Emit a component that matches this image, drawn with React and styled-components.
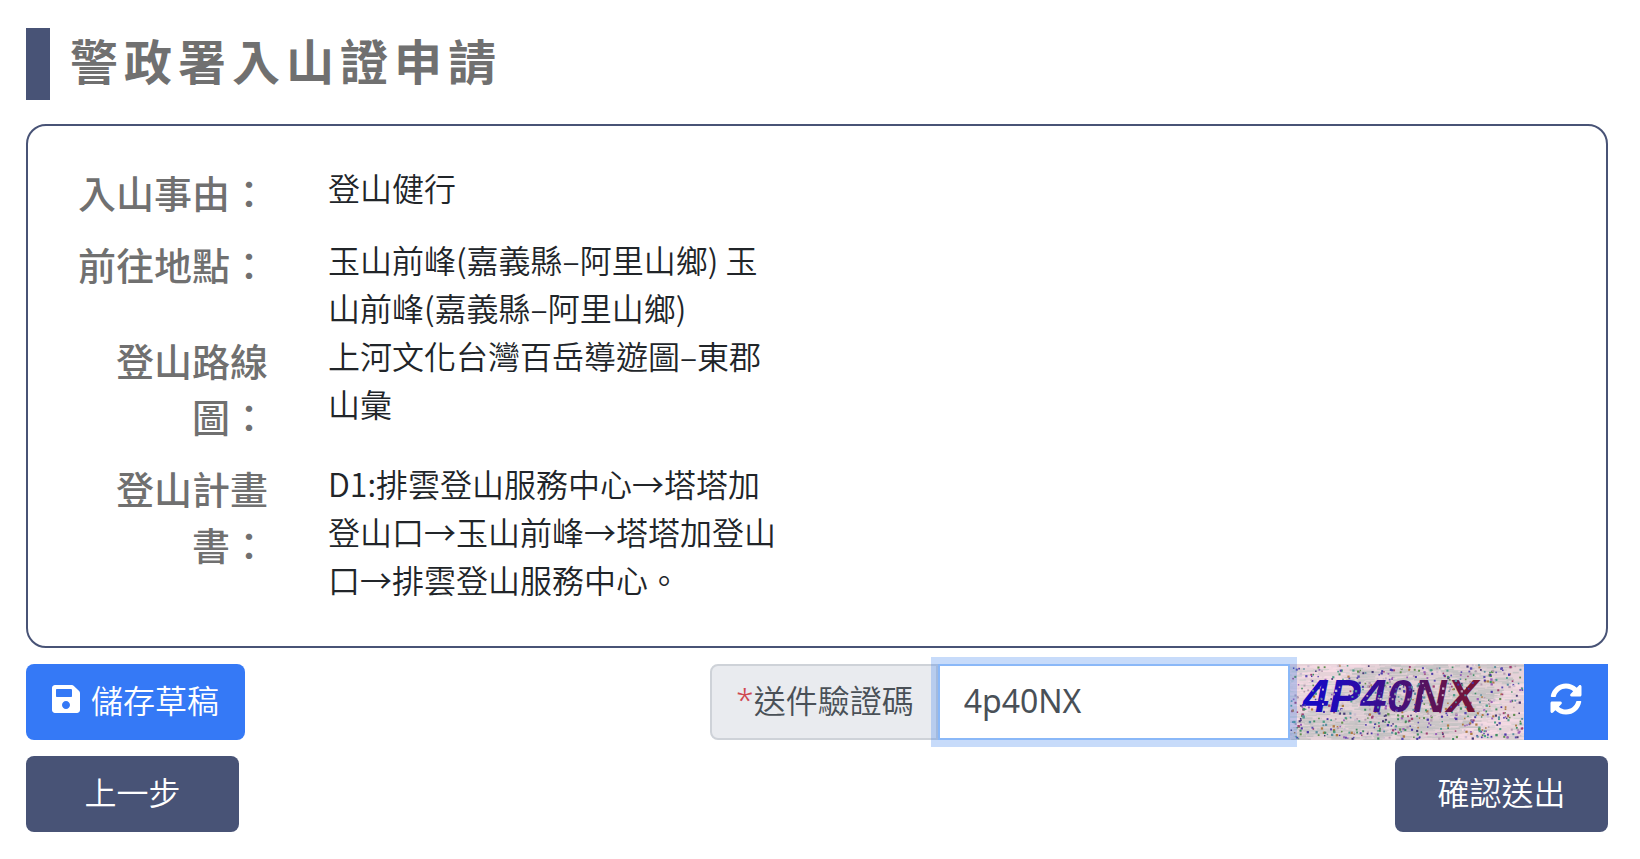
import React from "react";
import styled, { createGlobalStyle } from "styled-components";
import { FaSave, FaSyncAlt } from "react-icons/fa";

const GlobalStyle = createGlobalStyle`
  * {
    box-sizing: border-box;
  }

  body {
    margin: 0;
    background: #fff;
    color: #212529;
    font-family: "Noto Sans CJK TC", "Noto Sans", sans-serif;
    font-size: 32px;
    font-weight: 350;
    line-height: 48px;
  }
`;

const Page = styled.main`
  padding: 28px 32px 26px 26px;
`;

const Title = styled.h1`
  margin: 0 0 24px;
  padding: 0 0 10px 20px;
  border-left: 24px solid #485376;
  color: #707070;
  font-size: 48px;
  font-weight: 700;
  line-height: 62px;
  letter-spacing: 6px;
`;

const Card = styled.section`
  margin-bottom: 16px;
  padding: 37px 24px 43px;
  border: 2px solid #485376;
  border-radius: 20px;
`;

const Details = styled.dl`
  margin: 0;
`;

const Row = styled.div`
  display: grid;
  grid-template-columns: 216px minmax(0, 456px);
  column-gap: 60px;
`;

const Term = styled.dt`
  padding: 1px 0 15px;
  color: #707070;
  font-size: 38px;
  font-weight: 500;
  line-height: 56px;
  text-align: right;
`;

const Value = styled.dd`
  margin: 0;
`;

const Bar = styled.div`
  display: flex;
  justify-content: space-between;
  gap: 24px;
  margin-bottom: 16px;
`;

const Button = styled.button`
  display: inline-flex;
  align-items: center;
  justify-content: center;
  gap: 11px;
  min-width: ${({ $wide }) => ($wide ? "213px" : "0")};
  height: 76px;
  padding: 0 26px 6px;
  border: 0;
  border-radius: ${({ $square }) => ($square ? "0" : "8px")};
  background: ${({ $primary }) => ($primary ? "#3579f6" : "#485376")};
  color: #fff;
  font: inherit;
  white-space: nowrap;
  cursor: pointer;

  svg {
    flex: none;
  }
`;

const SaveIcon = styled(FaSave)`
  width: 28px;
  height: 32px;
`;

const InputGroup = styled.div`
  display: flex;
  flex: 0 1 898px;
  min-width: 0;
`;

const GroupLabel = styled.label`
  display: flex;
  align-items: center;
  padding: 0 22px 6px 24px;
  border: 2px solid #ced2d8;
  border-radius: 8px 0 0 8px;
  background: #e9ebef;
  color: #495057;
  white-space: nowrap;
`;

const Required = styled.span`
  color: #d0484f;
  font-family: "Noto Sans", sans-serif;
`;

const CodeInput = styled.input`
  position: relative;
  z-index: 1;
  flex: 1;
  min-width: 0;
  height: 76px;
  padding: 0 24px 4px;
  border: 2px solid #8ab8f8;
  border-radius: 0;
  outline: 0;
  background: #fff;
  box-shadow: 0 0 0 7px rgba(53, 125, 236, 0.28);
  color: #495057;
  font: inherit;
  font-family: "Noto Sans", "Noto Sans CJK TC", sans-serif;
  font-weight: 400;
`;

const Captcha = styled.svg`
  flex: none;
  width: 234px;
  height: 76px;
  background: #e6d2d8;
`;

// small deterministic generator so the noise is stable between renders
const createRandom = (seed) => {
  let value = seed;
  return () => {
    value = (value * 16807) % 2147483647;
    return value / 2147483647;
  };
};

const random = createRandom(4040);
const pick = (list) => list[Math.floor(random() * list.length)];

const streaks = Array.from({ length: 1100 }, () => {
  const x = random() * 234;
  const y = random() * 76;
  const middle = Math.abs(x - 117 + (y - 38)) < 85;
  return {
    x,
    y,
    width: 4 + random() * 16,
    color: middle
      ? pick(["#c3c0c2", "#cac6c7", "#c8c5c6", "#dccdd2"])
      : pick(["#f6dbe4", "#f3d9e2", "#ecd6de", "#d4cfd1"]),
  };
});

const createDots = (count, colors) =>
  Array.from({ length: count }, () => ({
    x: random() * 232,
    y: random() * 74,
    size: 1.4 + random(),
    color: pick(colors),
  }));

const dots = createDots(460, [
  "#3f8f63",
  "#5a4ab0",
  "#a03f72",
  "#4f9f8a",
  "#b07a45",
  "#473a76",
  "#9a5fb8",
  "#608f50",
]);

const specks = createDots(240, ["#cbbcd0", "#5b8fa0", "#4a36a8", "#b59ab0"]);

const renderDot = (dot, i) => (
  <rect
    key={i}
    x={dot.x}
    y={dot.y}
    width={dot.size}
    height={dot.size}
    fill={dot.color}
  />
);

const CaptchaImage = () => (
  <Captcha viewBox="0 0 234 76" role="img" aria-label="驗證碼">
    <defs>
      <linearGradient
        id="captcha-ink"
        gradientUnits="userSpaceOnUse"
        x1="12"
        y1="0"
        x2="190"
        y2="0"
      >
        <stop offset="0" stopColor="#1408c8" />
        <stop offset="0.3" stopColor="#2a0cab" />
        <stop offset="0.65" stopColor="#501267" />
        <stop offset="1" stopColor="#7c1430" />
      </linearGradient>
    </defs>
    {streaks.map((s, i) => (
      <rect
        key={i}
        x={s.x - 8}
        y={s.y}
        width={s.width}
        height="1.6"
        fill={s.color}
      />
    ))}
    {dots.map(renderDot)}
    <text
      x="13"
      y="48"
      fill="url(#captcha-ink)"
      fontFamily="Liberation Sans, sans-serif"
      fontSize="47"
      fontStyle="italic"
      fontWeight="700"
    >
      4P40NX
    </text>
    {specks.map(renderDot)}
  </Captcha>
);

const details = [
  { term: "入山事由：", value: "登山健行" },
  {
    term: "前往地點：",
    value: "玉山前峰(嘉義縣–阿里山鄉) 玉山前峰(嘉義縣–阿里山鄉)",
  },
  { term: "登山路線圖：", value: "上河文化台灣百岳導遊圖–東郡山彙" },
  {
    term: "登山計畫書：",
    value:
      "D1:排雲登山服務中心→塔塔加登山口→玉山前峰→塔塔加登山口→排雲登山服務中心。",
  },
];

const App = () => {
  return (
    <>
      <GlobalStyle />
      <Page lang="zh-Hant">
        <Title>警政署入山證申請</Title>
        <Card>
          <Details>
            {details.map(({ term, value }) => (
              <Row key={term}>
                <Term>{term}</Term>
                <Value>{value}</Value>
              </Row>
            ))}
          </Details>
        </Card>
        <Bar>
          <Button type="button" $primary>
            <SaveIcon />
            儲存草稿
          </Button>
          <InputGroup>
            <GroupLabel htmlFor="captcha">
              <Required>*</Required>送件驗證碼
            </GroupLabel>
            <CodeInput id="captcha" type="text" defaultValue="4p40NX" />
            <CaptchaImage />
            <Button type="button" $primary $square aria-label="更新驗證碼">
              <FaSyncAlt />
            </Button>
          </InputGroup>
        </Bar>
        <Bar>
          <Button type="button" $wide>
            上一步
          </Button>
          <Button type="button" $wide>
            確認送出
          </Button>
        </Bar>
      </Page>
    </>
  );
};

export default App;
